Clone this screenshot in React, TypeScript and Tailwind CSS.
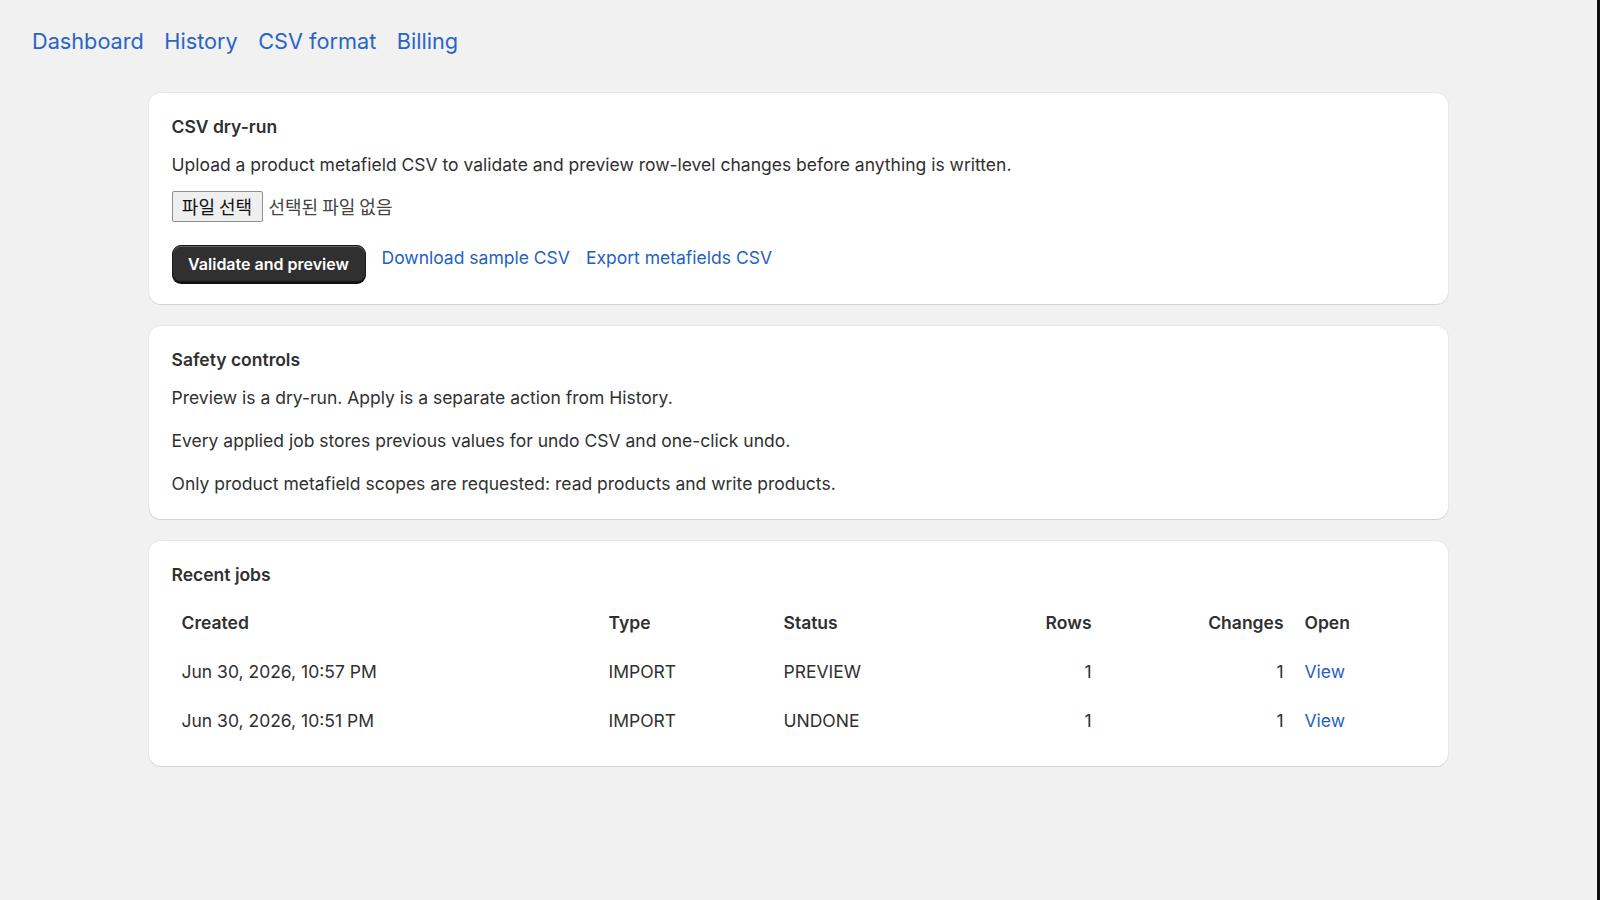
import React from 'react';

const jobs = [
    { created: 'Jun 30, 2026, 10:57 PM', type: 'IMPORT', status: 'PREVIEW', rows: 1, changes: 1 },
    { created: 'Jun 30, 2026, 10:51 PM', type: 'IMPORT', status: 'UNDONE', rows: 1, changes: 1 },
];

const cols = 'grid grid-cols-[427px_176px_206px_121px_192px_80px]';

const Card = ({ children, pb = 'pb-[22px]' }: { children: React.ReactNode; pb?: string }) => (
    <section className={`rounded-[12px] bg-white px-[23px] pt-[21px] ${pb} shadow-[0_1px_0_0_#d4d4d4,0_0_0_1px_#e8e8e8]`}>
        {children}
    </section>
);

export default function App() {
    return (
        <div className="flex min-h-[900px] bg-[#f1f1f1] font-['Inter','Liberation_Sans',sans-serif] text-[#303030]">
            <main className="flex-1">
                {/* top nav */}
                <nav className="flex gap-[20.5px] px-[32px] pt-[27px] text-[21.7px] leading-[28px] text-[#2a64c5]">
                    <a href="#">Dashboard</a>
                    <a href="#">History</a>
                    <a href="#">CSV format</a>
                    <a href="#">Billing</a>
                </nav>

                <div className="mx-auto mt-[38px] flex w-[1299px] flex-col gap-[22px]">
                    <Card pb="pb-[21.5px]">
                        <h2 className="text-[17.5px] leading-[26px] font-semibold">CSV dry-run</h2>
                        <p className="mt-[12px] text-[17.5px] leading-[26px]">
                            Upload a product metafield CSV to validate and preview row-level changes before anything is written.
                        </p>
                        <div className="mt-[13px] flex items-center gap-[6px] font-['Noto_Sans_CJK_KR',sans-serif] text-[18px]">
                            <span className="flex h-[31px] w-[91px] items-center justify-center rounded-[2px] border border-[#8f8f8f] bg-[#efefef] text-[#111]">
                                파일 선택
                            </span>
                            <span className="text-[#444]">선택된 파일 없음</span>
                        </div>
                        <div className="mt-[23px] flex items-start gap-[16px]">
                            <button className="h-[37px] w-[194px] rounded-[9px] border border-[#1a1a1a] bg-[#303030] text-[16px] font-semibold text-white shadow-[inset_0_1px_0_0_rgba(255,255,255,0.25),0_2px_0_0_#111]">
                                Validate and preview
                            </button>
                            <div className="flex gap-[16px] text-[17.5px] leading-[26px] text-[#1f5fc4]">
                                <a href="#">Download sample CSV</a>
                                <a href="#">Export metafields CSV</a>
                            </div>
                        </div>
                    </Card>

                    <Card>
                        <h2 className="text-[17.5px] leading-[26px] font-semibold">Safety controls</h2>
                        <div className="mt-[12px] flex flex-col gap-[17px] text-[17.5px] leading-[26px]">
                            <p>Preview is a dry-run. Apply is a separate action from History.</p>
                            <p>Every applied job stores previous values for undo CSV and one-click undo.</p>
                            <p>Only product metafield scopes are requested: read products and write products.</p>
                        </div>
                    </Card>

                    <Card pb="pb-[20px]">
                        <h2 className="text-[17.5px] leading-[26px] font-semibold">Recent jobs</h2>
                        <div className="mt-[12px] text-[17.5px]">
                            <div className={`${cols} h-[48px] items-center font-semibold`}>
                                <div className="px-[10px]">Created</div>
                                <div className="px-[10px]">Type</div>
                                <div className="px-[9px]">Status</div>
                                <div className="px-[10px] text-right">Rows</div>
                                <div className="px-[10px] text-right">Changes</div>
                                <div className="px-[11px]">Open</div>
                            </div>
                            {jobs.map(job => (
                                <div key={job.created} className={`${cols} h-[49px] items-center`}>
                                    <div className="px-[10px]">{job.created}</div>
                                    <div className="px-[10px]">{job.type}</div>
                                    <div className="px-[9px]">{job.status}</div>
                                    <div className="px-[10px] text-right">{job.rows}</div>
                                    <div className="px-[10px] text-right">{job.changes}</div>
                                    <div className="px-[11px]">
                                        <a href="#" className="text-[#1f5fc4]">View</a>
                                    </div>
                                </div>
                            ))}
                        </div>
                    </Card>
                </div>
            </main>
            <div className="w-[1px] bg-[#f7f7f7]" />
            <div className="w-[3px] bg-[#111]" />
        </div>
    );
}
